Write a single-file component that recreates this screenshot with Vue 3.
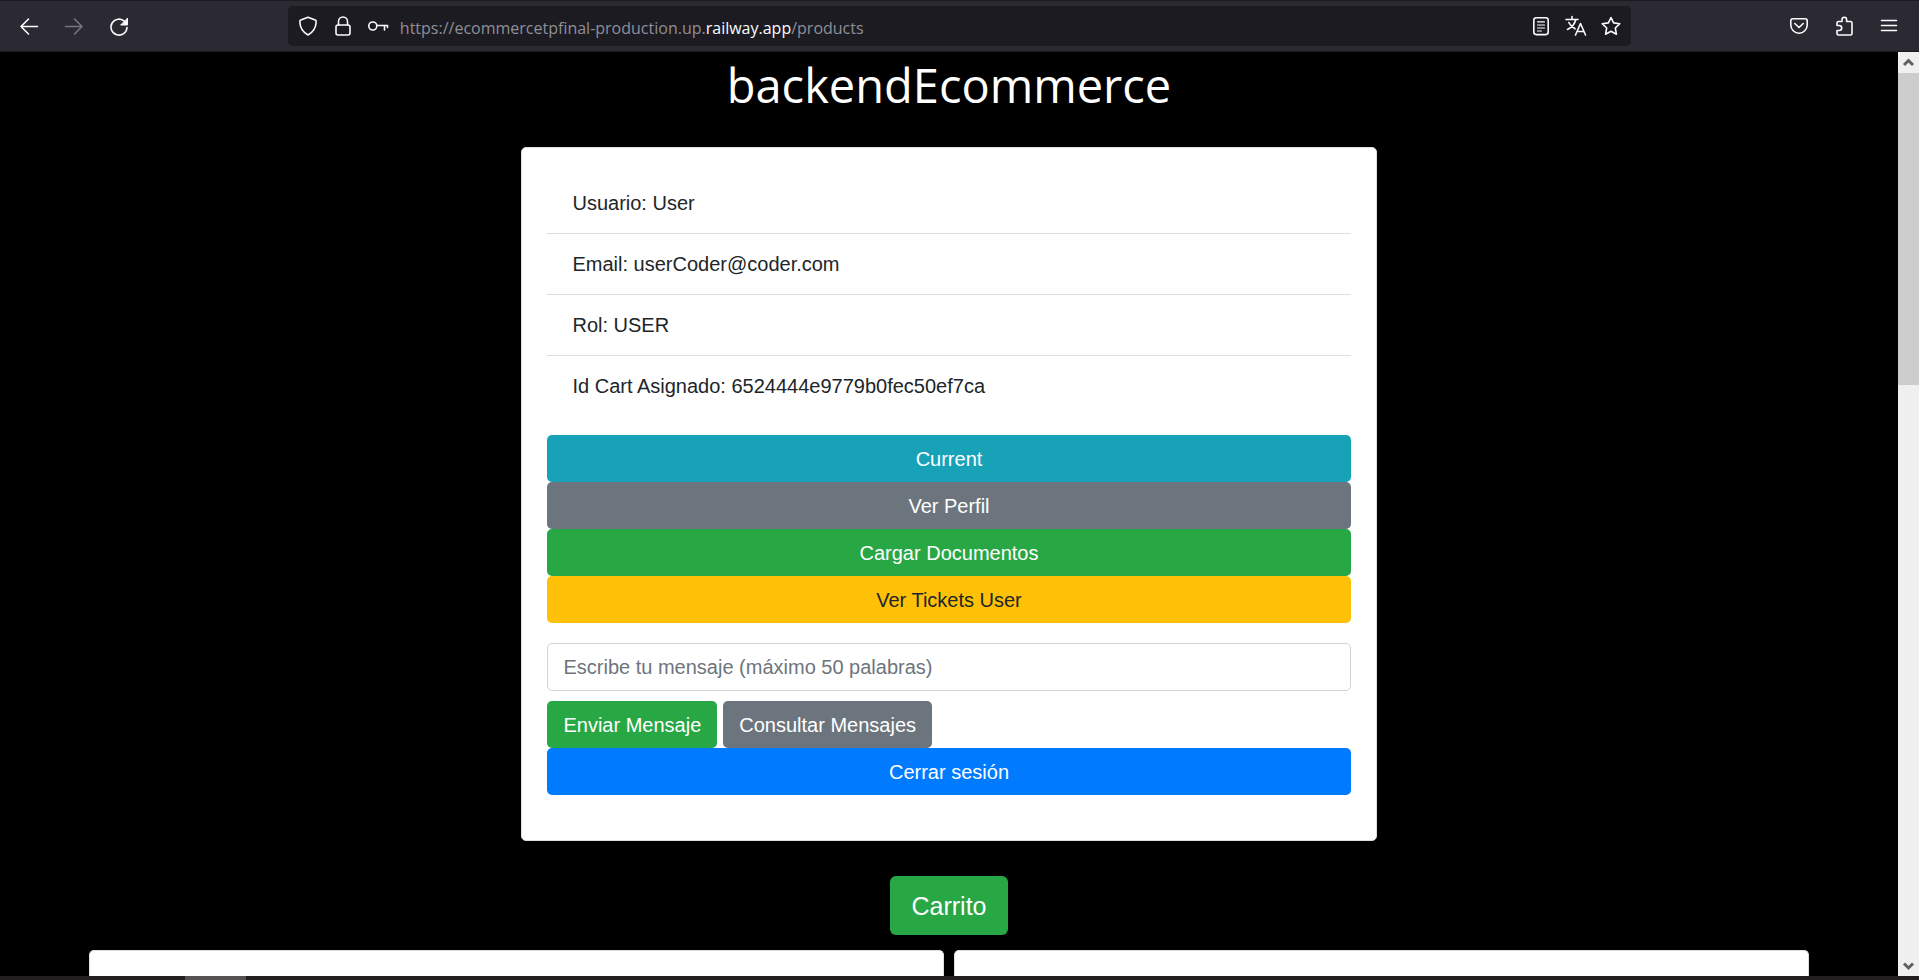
<script setup>
import { ref } from 'vue'

const message = ref('')
const details = [
  'Usuario: User',
  'Email: userCoder@coder.com',
  'Rol: USER',
  'Id Cart Asignado: 6524444e9779b0fec50ef7ca',
]
const actions = [
  { label: 'Current', tone: 'info' },
  { label: 'Ver Perfil', tone: 'secondary' },
  { label: 'Cargar Documentos', tone: 'success' },
  { label: 'Ver Tickets User', tone: 'warning' },
]
</script>

<template>
  <div class="window">
    <header class="toolbar">
      <nav class="history" aria-label="Historial">
        <button class="icon" aria-label="Atrás">
          <svg viewBox="0 0 20 20"><path d="M18.500 10.500H2M9.500 3L2 10.500L9.500 18" /></svg>
        </button>
        <button class="icon faded" aria-label="Adelante">
          <svg viewBox="0 0 20 20"><path d="M1.500 10.500H18M10.500 3L18 10.500L10.500 18" /></svg>
        </button>
        <button class="icon" aria-label="Recargar">
          <svg viewBox="0 0 20 20"><path d="M15.700 5.500A8 8 0 1 0 18 11.500" /><path class="solid" d="M18.500 2.500V9H12z" /></svg>
        </button>
      </nav>

      <div class="address">
        <div class="icons">
          <button class="icon" aria-label="Protección">
            <svg viewBox="0 0 20 20"><path d="M10 1.200L17.200 4Q18.200 4.400 18.200 5.500C18 12 14.500 16.500 10 19C5.500 16.500 2 12 1.800 5.500Q1.800 4.400 2.800 4Z" /></svg>
          </button>
          <button class="icon" aria-label="Conexión segura">
            <svg viewBox="0 0 20 20"><rect x="3" y="9" width="14" height="10" rx="2" /><path d="M5.500 9V5.500a4.500 4.500 0 0 1 9 0V9" /></svg>
          </button>
          <button class="icon" aria-label="Contraseñas">
            <svg viewBox="0 0 20 20"><circle cx="4.800" cy="10" r="4" /><path d="M8.800 9.500H19.500M16.500 9.500V14M19.500 9.500V11.500" /></svg>
          </button>
        </div>
        <div class="url">https://ecommercetpfinal-production.up.<span class="domain">railway.app</span>/products</div>
        <div class="icons">
          <button class="icon" aria-label="Vista de lectura">
            <svg viewBox="0 0 20 20"><rect x="2.800" y="1.800" width="14.400" height="16.800" rx="2.500" /><path d="M6.500 5.800H13.500M6.500 9H13.500M6.500 12H13.500M6.500 15H10.500" class="fine" /></svg>
          </button>
          <button class="icon" aria-label="Traducir">
            <svg viewBox="0 0 20 20"><path d="M0 3.500H12M6 .5V3.500M9.800 3.500C8.800 8 5.500 11.500 1.500 13.500M2.800 6.500C4 9 6 11 9 12.800" /><path d="M9.500 19L14.500 7.500L19.500 19M11.200 15.500H17.800" /></svg>
          </button>
          <button class="icon" aria-label="Marcador">
            <svg viewBox="0 0 20 20"><path d="M10 1.500L12.600 6.900L18.800 7.700L14.300 12L15.400 18.200L10 15.300L4.600 18.200L5.700 12L1.200 7.700L7.400 6.900Z" /></svg>
          </button>
        </div>
      </div>

      <nav class="tools" aria-label="Herramientas">
        <button class="icon" aria-label="Pocket">
          <svg viewBox="0 0 20 20"><path d="M3.800 2.800H16.200Q18.200 2.800 18.200 4.800V9A8.200 8.200 0 0 1 1.800 9V4.800Q1.800 2.800 3.800 2.800Z" /><path d="M5.800 7.500L10 11.500L14.200 7.500" /></svg>
        </button>
        <button class="icon" aria-label="Extensiones">
          <svg viewBox="0 0 20 20"><path d="M3 9.500V7Q3 5.500 4.500 5.500H8V3.500a2.300 2.300 0 0 1 4.600 0V5.500H16.500Q18 5.500 18 7V17.500Q18 19 16.500 19H4.500Q3 19 3 17.500V14.500H5.200a2.500 2.500 0 0 0 0-5Z" /></svg>
        </button>
        <button class="icon" aria-label="Menú">
          <svg viewBox="0 0 20 20"><path d="M2.500 4.500H17.500M2.500 9.500H17.500M2.500 14.500H17.500" /></svg>
        </button>
      </nav>
    </header>

    <div class="viewport">
      <main class="page">
        <h1>backendEcommerce</h1>

        <section class="card profile">
          <ul>
            <li v-for="detail in details" :key="detail">{{ detail }}</li>
          </ul>
          <div class="stack">
            <button v-for="action in actions" :key="action.label" class="btn" :class="action.tone">{{ action.label }}</button>
          </div>
          <form @submit.prevent>
            <input v-model="message" type="text" aria-label="Mensaje" placeholder="Escribe tu mensaje (máximo 50 palabras)" />
            <div class="row">
              <button type="submit" class="btn success">Enviar Mensaje</button>
              <button type="button" class="btn secondary">Consultar Mensajes</button>
            </div>
          </form>
          <div class="stack">
            <button class="btn primary">Cerrar sesión</button>
          </div>
        </section>

        <button class="btn success large">Carrito</button>

        <section class="products">
          <article class="card"></article>
          <article class="card"></article>
        </section>
      </main>

      <div class="scrollbar" aria-hidden="true">
        <svg viewBox="0 0 21 21"><path d="M6 13L10.500 8.500L15 13" /></svg>
        <div class="track"><div class="thumb"></div></div>
        <svg viewBox="0 0 21 21"><path d="M6 8.500L10.500 13L15 8.500" /></svg>
      </div>
    </div>

    <footer class="taskbar"><span></span></footer>
  </div>
</template>

<style>
body {
  margin: 0;
  background: #000;
}
</style>

<style scoped>
* {
  box-sizing: border-box;
}
.window {
  display: flex;
  flex-direction: column;
  height: 100vh;
  overflow: hidden;
  font: 20px/30px "Liberation Sans", Arial, sans-serif;
  color: #212529;
}
button,
input {
  font: inherit;
}
.toolbar {
  display: flex;
  align-items: center;
  flex: none;
  height: 52px;
  border-top: 1px solid #1c1b22;
  border-bottom: 1px solid #1c1b22;
  background: #2b2a33;
}
.history,
.tools {
  display: flex;
  gap: 25px;
  width: 15%;
}
.history {
  padding-left: 19px;
}
.tools {
  justify-content: flex-end;
  padding-right: 20px;
}
.icon {
  width: 20px;
  height: 20px;
  padding: 0;
  border: 0;
  background: none;
  color: #fbfbfe;
}
.icon.faded {
  color: #77767d;
}
.icon svg {
  display: block;
  width: 20px;
  height: 20px;
  overflow: visible;
  fill: none;
  stroke: currentColor;
  stroke-width: 1.6;
  stroke-linecap: round;
  stroke-linejoin: round;
}
.icon .solid {
  fill: currentColor;
  stroke-width: 1;
}
.icon .fine {
  stroke-width: 1.2;
}
.address {
  display: flex;
  align-items: center;
  flex: 1;
  gap: 12px;
  height: 40px;
  padding: 0 10px;
  border-radius: 5px;
  background: #1c1b22;
}
.icons {
  display: flex;
  gap: 15px;
}
.url {
  flex: 1;
  padding-top: 3px;
  font: 16px/24px "Open Sans", "Noto Sans", sans-serif;
  color: #8f8f97;
}
.domain {
  color: #fbfbfe;
}
.viewport {
  display: flex;
  flex: 1;
  min-height: 0;
}
.page {
  display: flex;
  flex-direction: column;
  align-items: center;
  flex: 1;
  overflow: hidden;
  background: #000;
}
h1 {
  margin: 0 0 29px;
  font: 400 47px/66px "Open Sans", "Noto Sans", sans-serif;
  color: #fff;
}
.card {
  width: calc(45% + 1px);
  border: 1px solid #dfdfdf;
  border-radius: 5px;
  background: #fff;
}
.profile {
  flex: none;
  padding: 25px 25px 45px;
}
ul {
  margin: 0 0 19px;
  padding: 0;
  list-style: none;
}
li {
  padding: 15px 25px;
  border-bottom: 1px solid #dfdfdf;
}
li:last-child {
  border-bottom: 0;
}
.stack {
  display: flex;
  flex-direction: column;
}
.btn {
  flex: none;
  padding: 9px 16px 7px;
  border: 0;
  border-radius: 5px;
  line-height: 31px;
  color: #fff;
}
.info {
  background: #17a2b8;
}
.secondary {
  background: #6c757d;
}
.success {
  background: #28a745;
}
.warning {
  background: #ffc107;
  color: #212529;
}
.primary {
  background: #007bff;
}
form {
  margin-top: 20px;
}
input {
  display: block;
  width: 100%;
  height: 48px;
  margin-bottom: 10px;
  padding: 0 15px;
  border: 1px solid #ced4da;
  border-radius: 5px;
  color: #495057;
}
input::placeholder {
  color: #6c757d;
  opacity: 1;
}
.row {
  display: flex;
  gap: 6px;
}
.large {
  margin: 35px 0 15px;
  padding: 11px 21px 9px;
  border-radius: 6px;
  font-size: 25px;
  line-height: 39px;
}
.products {
  display: flex;
  justify-content: center;
  flex: 1;
  gap: 10px;
  width: 100%;
}
.products .card {
  border-bottom: 0;
  border-radius: 5px 5px 0 0;
}
.scrollbar {
  display: flex;
  flex-direction: column;
  width: 21px;
  background: #f0f0f0;
}
.scrollbar svg {
  flex: none;
  height: 21px;
  fill: none;
  stroke: #606060;
  stroke-width: 3;
}
.track {
  flex: 1;
}
.thumb {
  height: 35.4%;
  background: #cdcdcd;
}
.taskbar {
  flex: none;
  height: 4px;
  padding-left: 185px;
  background: #231f20;
}
.taskbar span {
  display: block;
  width: 61px;
  height: 100%;
  background: #555051;
}
</style>
